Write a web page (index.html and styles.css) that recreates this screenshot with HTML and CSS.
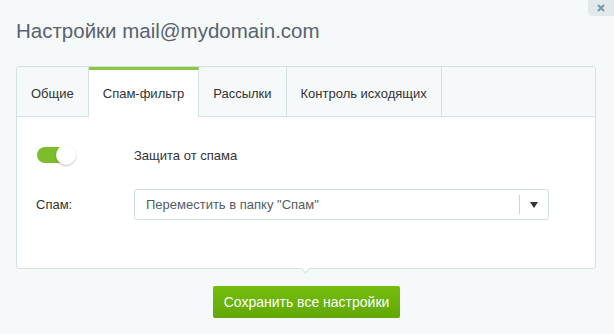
FILE: index.html
```html
<!DOCTYPE html>
<html lang="ru">
<head>
  <meta charset="UTF-8">
  <title>Настройки почты</title>
  <link rel="stylesheet" href="styles.css">
</head>
<body>
  <button class="close" title="Закрыть">
    <svg width="8" height="8" viewBox="0 0 8 8"><path d="M1 1L7 7M7 1L1 7" stroke="#7d94a6" stroke-width="2"/></svg>
  </button>

  <h1 class="title">Настройки mail@mydomain.com</h1>

  <div class="panel">
    <div class="tabs">
      <div class="tab">Общие</div>
      <div class="tab active">Спам-фильтр</div>
      <div class="tab">Рассылки</div>
      <div class="tab">Контроль исходящих</div>
    </div>

    <div class="panel-body">
      <div class="row">
        <div class="row-label">
          <span class="toggle"><span class="knob"></span></span>
        </div>
        <div class="row-control">Защита от спама</div>
      </div>

      <div class="row row-select">
        <div class="row-label">Спам:</div>
        <div class="row-control">
          <div class="select">
            <span class="select-text">Переместить в папку "Спам"</span>
            <span class="select-arrow">
              <svg width="8" height="6" viewBox="0 0 8 6"><path d="M0 0H8L4 6Z" fill="#333"/></svg>
            </span>
          </div>
        </div>
      </div>
    </div>

    <span class="notch"></span>
  </div>

  <div class="footer">
    <button class="btn-save">Сохранить все настройки</button>
  </div>
</body>
</html>
```

FILE: styles.css
```css
body {
  margin: 0;
  padding: 0 16px;
  background: #f5f9f9;
  font-family: "Liberation Sans", Arial, sans-serif;
  color: #333;
  position: relative;
  height: 334px;
  box-sizing: border-box;
}
.close {
  position: absolute;
  top: 0;
  right: 0;
  width: 26px;
  height: 16px;
  border: none;
  padding: 0;
  background: #e1e9ec;
  border-radius: 0 0 0 4px;
  display: flex;
  align-items: center;
  justify-content: center;
}
.title {
  margin: 0;
  padding-top: 19px;
  height: 66px;
  box-sizing: border-box;
  font-size: 20.5px;
  line-height: 24px;
  font-weight: normal;
  color: #59626f;
}
.panel {
  position: relative;
  width: 580px;
  height: 203px;
  box-sizing: border-box;
  background: #fff;
  border: 1px solid #d3e0e4;
  border-radius: 3px;
}
.tabs {
  display: flex;
  height: 50px;
  box-sizing: border-box;
  background: #f5f9f9;
  border-bottom: 1px solid #d3e0e4;
  border-radius: 3px 3px 0 0;
}
.tab {
  padding: 3px 14px 0;
  height: 49px;
  box-sizing: border-box;
  display: flex;
  align-items: center;
  border-right: 1px solid #d3e0e4;
  font-size: 13px;
  color: #333;
}
.tab.active {
  background: #fff;
  border-top: 3px solid #8dc63f;
  padding-top: 0;
  height: 50px;
}
.panel-body {
  padding: 28px 19px 0;
}
.row {
  display: flex;
  align-items: center;
  height: 20px;
}
.row-select {
  margin-top: 24px;
  height: 31px;
}
.row-label {
  width: 98px;
  font-size: 13px;
  color: #333;
}
.row-control {
  font-size: 13px;
  color: #333;
}
.toggle {
  display: block;
  position: relative;
  width: 40px;
  height: 20px;
  margin-left: 1px;
}
.toggle::before {
  content: "";
  position: absolute;
  left: 0;
  top: 2px;
  width: 34px;
  height: 16px;
  border-radius: 8px;
  background: #7bbd2a;
}
.knob {
  position: absolute;
  right: 1px;
  top: 0;
  width: 20px;
  height: 20px;
  border-radius: 50%;
  background: #fff;
  box-shadow: 0 1px 2px rgba(0, 0, 0, 0.25);
}
.select {
  width: 415px;
  height: 31px;
  box-sizing: border-box;
  border: 1px solid #cfdde2;
  border-radius: 3px;
  background: #fff;
  display: flex;
  align-items: center;
  padding-left: 11px;
}
.select-text {
  flex: 1;
  color: #535c69;
}
.select-arrow {
  width: 28px;
  height: 19px;
  border-left: 1px solid #c9d4d8;
  display: flex;
  align-items: center;
  justify-content: center;
}
.notch {
  position: absolute;
  left: 285px;
  bottom: -4px;
  width: 6px;
  height: 6px;
  background: #fff;
  border-right: 1px solid #d3e0e4;
  border-bottom: 1px solid #d3e0e4;
  transform: rotate(45deg);
}
.footer {
  display: flex;
  padding-top: 17px;
  padding-left: 197px;
}
.btn-save {
  width: 187px;
  height: 32px;
  border: none;
  border-radius: 2px;
  background: linear-gradient(#74bd0c, #62a807);
  color: #fff;
  font-family: "Liberation Sans", Arial, sans-serif;
  font-size: 14px;
  padding: 0;
}
```
